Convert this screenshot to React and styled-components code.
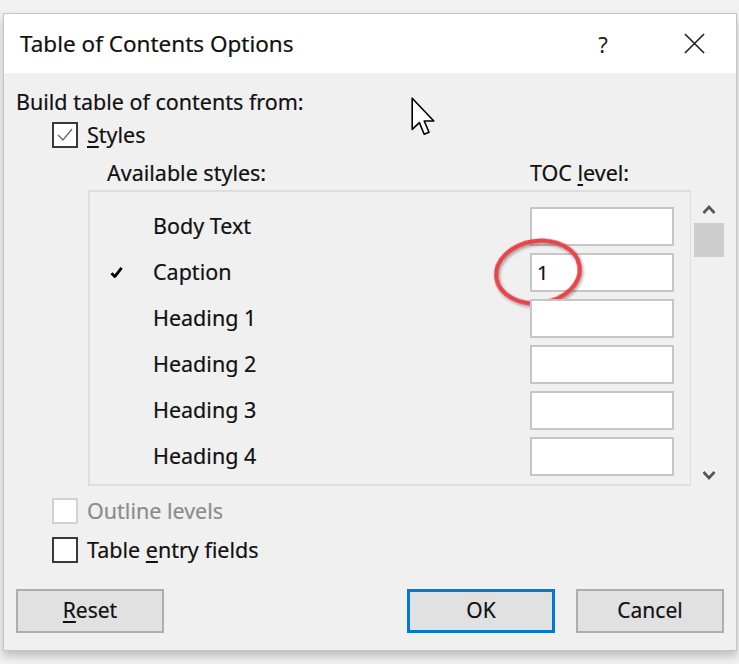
import React from 'react';
import styled, { createGlobalStyle } from 'styled-components';

const styleRows = [
  { name: 'Body Text', level: '', used: false },
  { name: 'Caption', level: '1', used: true, marked: true },
  { name: 'Heading 1', level: '', used: false },
  { name: 'Heading 2', level: '', used: false },
  { name: 'Heading 3', level: '', used: false },
  { name: 'Heading 4', level: '', used: false },
];

const GlobalStyle = createGlobalStyle`
  html, body {
    margin: 0;
    padding: 0;
    background: #f2f2f2;
  }
  body {
    font-family: "Noto Sans", "Open Sans", sans-serif;
    color: #111;
    -webkit-text-stroke: 0.2px currentColor;
  }
`;

const Page = styled.div`
  padding: 13px 2px 14px 3px;
`;

const Dialog = styled.div`
  position: relative;
  background: #f0f0f0;
  border: 1px solid #c4c4c4;
  box-shadow: 0 5px 9px rgba(0, 0, 0, 0.22);
  display: flex;
  flex-direction: column;
`;

const TitleBar = styled.div`
  height: 59px;
  background: #ffffff;
  display: flex;
  align-items: center;
  padding-left: 16px;
`;

const Title = styled.div`
  flex: 1;
  font-size: 22.5px;
  color: #111;
`;

const TitleButton = styled.div`
  width: ${(p) => p.$w}px;
  display: flex;
  justify-content: center;
  align-items: center;
  font-size: 22px;
  color: #222;
  -webkit-text-stroke: 0;
  margin-right: ${(p) => p.$mr || 0}px;
`;

const Body = styled.div`
  position: relative;
  padding: 17px 12px 17px 12px;
  display: flex;
  flex-direction: column;
  font-size: 21.5px;
`;

const Label = styled.div`
  line-height: 24px;
  white-space: nowrap;
  color: ${(p) => (p.$disabled ? '#8c8c8c' : '#111')};
`;

const CheckRow = styled.label`
  display: flex;
  align-items: center;
  gap: 9px;
  height: 26px;
  margin-top: ${(p) => p.$mt}px;
  margin-left: 36px;
`;

const Box = styled.span`
  box-sizing: border-box;
  width: 26px;
  height: 26px;
  border: 2px solid ${(p) => (p.$disabled ? '#d2d2d2' : '#3a3a3a')};
  background: #ffffff;
  display: flex;
  align-items: center;
  justify-content: center;
`;

const Key = styled.span`
  text-decoration: underline;
  text-underline-offset: 3px;
`;

const Headers = styled.div`
  display: flex;
  margin-top: 13px;
  line-height: 24px;
  white-space: nowrap;
`;

const HeaderCell = styled.div`
  margin-left: ${(p) => p.$ml}px;
  width: ${(p) => (p.$w ? `${p.$w}px` : 'auto')};
`;

const ListArea = styled.div`
  display: flex;
  margin-top: 5px;
  margin-left: 72px;
  gap: 3px;
  height: 296px;
`;

const ListBox = styled.div`
  box-sizing: border-box;
  width: 604px;
  border: 2px solid #dedede;
  border-right-width: 1px;
  overflow: hidden;
  padding: 15px 16px 0 0;
  display: flex;
  flex-direction: column;
  gap: 7px;
`;

const StyleRow = styled.div`
  display: flex;
  align-items: center;
  height: 39px;
  flex-shrink: 0;
`;

const Mark = styled.div`
  width: 63px;
  padding-left: 20px;
  box-sizing: border-box;
  display: flex;
  align-items: center;
`;

const StyleName = styled.div`
  flex: 1;
  margin-top: -3px;
  white-space: nowrap;
`;

const LevelCell = styled.div`
  position: relative;
  box-sizing: border-box;
  width: 144px;
  height: 39px;
  background: #ffffff;
  border: 2px solid #c6c6c6;
  padding-left: 5px;
  display: flex;
  align-items: center;
  font-size: 20px;
`;

const Ring = styled.svg`
  position: absolute;
  left: -44px;
  top: -23px;
  pointer-events: none;
  overflow: visible;
`;

const ScrollBar = styled.div`
  width: 30px;
  display: flex;
  flex-direction: column;
  align-items: center;
`;

const Arrow = styled.svg`
  margin-top: ${(p) => p.$mt}px;
  margin-bottom: ${(p) => p.$mb || 0}px;
`;

const Thumb = styled.div`
  width: 30px;
  height: 34px;
  margin-top: 9px;
  background: #cdcdcd;
`;

const Spacer = styled.div`
  flex: 1;
`;

const ButtonRow = styled.div`
  display: flex;
  margin-top: 26px;
`;

const Button = styled.button`
  box-sizing: border-box;
  width: 148px;
  height: 44px;
  font-family: inherit;
  font-size: 21px;
  color: #111;
  background: #e1e1e1;
  border: ${(p) => (p.$default ? '3px solid #0078d7' : '2px solid #adadad')};
  margin-left: ${(p) => p.$ml || 0}px;
  padding: 0 0 2px;
`;

const Cursor = styled.svg`
  position: absolute;
  left: 407px;
  top: 24px;
`;

const Tick = () => (
  <svg width="13" height="13" viewBox="0 0 13 13">
    <path d="M1.5 7.2 L4.8 10.6 L11.6 1.8" fill="none" stroke="#000" strokeWidth="2.8" strokeLinejoin="round" />
  </svg>
);

const App = () => (
  <Page>
    <GlobalStyle />
    <Dialog>
      <TitleBar>
        <Title>Table of Contents Options</Title>
        <TitleButton $w={20} $mr={69}>?</TitleButton>
        <TitleButton $w={24} $mr={30}>
          <svg width="21" height="21" viewBox="0 0 22 22">
            <path d="M1 1 L21 21 M21 1 L1 21" stroke="#222" strokeWidth="1.7" />
          </svg>
        </TitleButton>
      </TitleBar>

      <Body>
        <Label>Build table of contents from:</Label>

        <CheckRow $mt={8}>
          <Box>
            <svg width="18" height="16" viewBox="0 0 18 16">
              <path d="M2 8 L7 13 L16 2" fill="none" stroke="#6b6b6b" strokeWidth="1.4" />
            </svg>
          </Box>
          <Label><Key>S</Key>tyles</Label>
        </CheckRow>

        <Headers>
          <HeaderCell $ml={91} $w={423}>Available styles:</HeaderCell>
          <HeaderCell $ml={0}>TOC <Key>l</Key>evel:</HeaderCell>
        </Headers>

        <ListArea>
          <ListBox>
            {styleRows.map((row) => (
              <StyleRow key={row.name}>
                <Mark>{row.used && <Tick />}</Mark>
                <StyleName>{row.name}</StyleName>
                <LevelCell>
                  {row.level}
                  {row.marked && (
                    <Ring width="100" height="80" viewBox="0 0 100 80">
                      <defs>
                        <filter id="ringShadow" x="-20%" y="-20%" width="140%" height="140%">
                          <feDropShadow dx="1" dy="2" stdDeviation="1.6" floodColor="#000" floodOpacity="0.35" />
                        </filter>
                      </defs>
                      <ellipse
                        cx="50"
                        cy="40"
                        rx="42"
                        ry="31"
                        transform="rotate(-8 50 40)"
                        fill="none"
                        stroke="#e3474c"
                        strokeWidth="4.4"
                        filter="url(#ringShadow)"
                      />
                    </Ring>
                  )}
                </LevelCell>
              </StyleRow>
            ))}
          </ListBox>

          <ScrollBar>
            <Arrow $mt={15} width="14" height="9" viewBox="0 0 14 9">
              <path d="M1.5 8 L7 2 L12.5 8" fill="none" stroke="#555" strokeWidth="2.6" />
            </Arrow>
            <Thumb />
            <Spacer />
            <Arrow $mt={0} $mb={6} width="14" height="9" viewBox="0 0 14 9">
              <path d="M1.5 1 L7 7 L12.5 1" fill="none" stroke="#555" strokeWidth="2.6" />
            </Arrow>
          </ScrollBar>
        </ListArea>

        <CheckRow $mt={12}>
          <Box $disabled />
          <Label $disabled>Outline levels</Label>
        </CheckRow>

        <CheckRow $mt={13}>
          <Box />
          <Label>Table <Key>e</Key>ntry fields</Label>
        </CheckRow>

        <ButtonRow>
          <Button><Key>R</Key>eset</Button>
          <Spacer />
          <Button $default>OK</Button>
          <Button $ml={21}>Cancel</Button>
        </ButtonRow>

        <Cursor width="26" height="40" viewBox="0 0 13 20">
          <path
            d="M0.6 0.6 L0.6 16.2 L4.2 12.8 L6.6 18.6 L9 17.6 L6.6 12 L11.4 12 Z"
            fill="#fff"
            stroke="#000"
            strokeWidth="0.8"
            strokeLinejoin="round"
          />
        </Cursor>
      </Body>
    </Dialog>
  </Page>
);

export default App;
